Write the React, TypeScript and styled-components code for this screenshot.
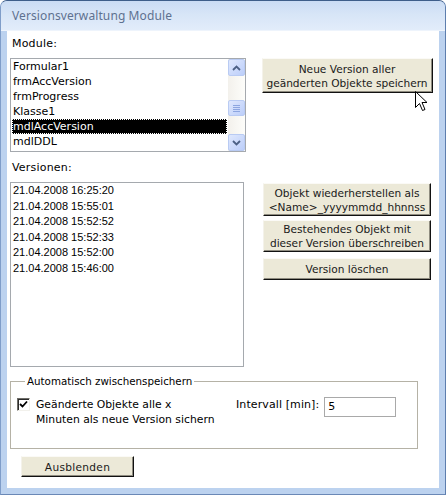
import React from 'react';
import styled, { createGlobalStyle } from 'styled-components';

const GlobalStyle = createGlobalStyle`
  body {
    margin: 0;
    background: #ffffff;
  }
`;

const UI_FONT = `"DejaVu Sans", Tahoma, sans-serif`;

const Window = styled.div`
  position: relative;
  box-sizing: border-box;
  width: 446px;
  height: 495px;
  display: flex;
  flex-direction: column;
  border: 1px solid #3e5e8a;
  border-left-color: #7f9dc9;
  border-right-color: #5d7eae;
  border-bottom-color: #6a88b6;
  border-radius: 7px 7px 0 0;
  background: #bcd2ef;
  overflow: hidden;
`;

const TitleBar = styled.div`
  height: 29px;
  flex: none;
  display: flex;
  align-items: center;
  padding-left: 11px;
  background: linear-gradient(#cadcf4 0%, #d7e5f7 45%, #e2ecfa 100%);
  border-bottom: 1px solid #eef4fc;
`;

const Title = styled.span`
  font-family: "Noto Sans", "Open Sans", sans-serif;
  font-size: 12px;
  color: #5e7190;
  letter-spacing: 0.1px;
`;

const Client = styled.div`
  position: relative;
  flex: 1;
  margin: 0 6px 6px 6px;
  padding: 0 0 0 3px;
  background: #ffffff;
  font-family: ${UI_FONT};
  font-size: 11px;
  color: #000;
`;

const Main = styled.div`
  display: flex;
  align-items: flex-start;
`;

const LeftCol = styled.div`
  display: flex;
  flex-direction: column;
  width: 236px;
`;

const RightCol = styled.div`
  display: flex;
  flex-direction: column;
  align-items: center;
  width: 172px;
  margin-left: 15px;
`;

const Label = styled.div<{ $top: number }>`
  margin-top: ${(p) => p.$top}px;
  padding-left: 2px;
  line-height: 14px;
  letter-spacing: 0.2px;
`;

const ListBox = styled.div`
  box-sizing: border-box;
  width: 236px;
  height: 94px;
  margin-top: 7px;
  display: flex;
  border: 1px solid #a5a9ae;
`;

const ListItems = styled.div`
  flex: 1;
  padding: 0 1px;
`;

const Item = styled.div<{ $selected?: boolean }>`
  height: 15px;
  line-height: 15px;
  padding-left: 1px;
  white-space: nowrap;
  background: ${(p) => (p.$selected ? '#000000' : 'transparent')};
  color: ${(p) => (p.$selected ? '#ffffff' : '#000000')};
  outline: ${(p) => (p.$selected ? '1px dotted #ffffff' : 'none')};
  outline-offset: -1px;
`;

const ScrollBar = styled.div`
  width: 17px;
  display: flex;
  flex-direction: column;
  background: linear-gradient(90deg, #f3f1ec, #fdfdfa);
`;

const ScrollBtn = styled.div`
  box-sizing: border-box;
  height: 17px;
  display: flex;
  align-items: center;
  justify-content: center;
  border: 1px solid #b9cbf3;
  border-radius: 2px;
  background: linear-gradient(135deg, #dfe8fd, #bccefa);
`;

const Track = styled.div`
  flex: 1;
  display: flex;
  flex-direction: column;
  padding-top: 24px;
`;

const Thumb = styled(ScrollBtn)`
  height: 16px;
`;

const VersionList = styled.div`
  box-sizing: border-box;
  width: 234px;
  height: 185px;
  margin-top: 7px;
  padding: 0 2px;
  border: 1px solid #a5a9ae;
  font-family: "Liberation Sans", Arial, sans-serif;
  font-size: 11px;
`;

const VersionItem = styled.div`
  line-height: 15.5px;
  white-space: nowrap;
`;

const ActionButton = styled.button<{ $w: number; $h: number; $top: number }>`
  box-sizing: border-box;
  width: ${(p) => p.$w}px;
  height: ${(p) => p.$h}px;
  margin-top: ${(p) => p.$top}px;
  padding: 0;
  font-family: ${UI_FONT};
  font-size: 10.6px;
  font-weight: 400;
  line-height: 14px;
  letter-spacing: 0;
  color: #1a1a1a;
  background: #ece9d8;
  border-style: solid;
  border-width: 1px;
  border-color: #fbfaf6 #111111 #111111 #f4f2ea;
  box-shadow: inset -1px -1px 0 #8f8c80;
  white-space: nowrap;
`;

const GroupBox = styled.fieldset`
  box-sizing: border-box;
  width: 408px;
  height: 75px;
  margin: 7px 0 0 0;
  padding: 9px 0 0 6px;
  border: 1px solid #b5b2a6;
  border-radius: 0;
`;

const Legend = styled.legend`
  margin-left: 8px;
  padding: 0 2px;
  font-size: 10.3px;
  line-height: 14px;
`;

const GroupRow = styled.div`
  display: flex;
  align-items: flex-start;
`;

const CheckRow = styled.div`
  display: flex;
  align-items: flex-start;
  width: 219px;
  flex: none;
`;

const CheckBox = styled.span`
  box-sizing: border-box;
  width: 13px;
  height: 13px;
  margin-top: 1px;
  flex: none;
  display: flex;
  align-items: center;
  justify-content: center;
  background: #ffffff;
  border: 1px solid;
  border-color: #6e6d68 #f2f1ec #f2f1ec #6e6d68;
  box-shadow: inset 1px 1px 0 #2b2b2b;
`;

const CheckText = styled.div`
  margin-left: 6px;
  font-size: 10.8px;
  line-height: 15px;
`;

const IntervalLabel = styled.div`
  line-height: 15px;
  letter-spacing: 0.1px;
`;

const NumberField = styled.div`
  box-sizing: border-box;
  width: 72px;
  height: 20px;
  margin: 0 0 0 5px;
  padding: 2px 0 0 3px;
  border: 1px solid #a9a9a9;
  line-height: 14px;
`;

const FooterButton = styled(ActionButton)`
  margin-left: 11px;
  letter-spacing: 0.3px;
`;

const Pointer = styled.svg`
  position: absolute;
  left: 408px;
  top: 60px;
`;

const modules = ['Formular1', 'frmAccVersion', 'frmProgress', 'Klasse1', 'mdlAccVersion', 'mdlDDL'];

const versions = [
	'21.04.2008 16:25:20',
	'21.04.2008 15:55:01',
	'21.04.2008 15:52:52',
	'21.04.2008 15:52:33',
	'21.04.2008 15:52:00',
	'21.04.2008 15:46:00',
];

function Arrow({ up }: { up?: boolean }) {
	return (
		<svg width="9" height="6" viewBox="0 0 9 6">
			<path
				d={up ? 'M1 5 L4.5 1.5 L8 5' : 'M1 1 L4.5 4.5 L8 1'}
				fill="none"
				stroke="#4d6185"
				strokeWidth="1.8"
			/>
		</svg>
	);
}

function Grip() {
	return (
		<svg width="7" height="7" viewBox="0 0 7 7">
			{[0.5, 2.5, 4.5, 6.5].map((y) => (
				<line key={y} x1="0" x2="7" y1={y} y2={y} stroke="#8da6e0" strokeWidth="1" />
			))}
		</svg>
	);
}

export default function App() {
	return (
		<>
			<GlobalStyle />
			<Window>
				<TitleBar>
					<Title>Versionsverwaltung Module</Title>
				</TitleBar>
				<Client>
					<Main>
						<LeftCol>
							<Label $top={6}>Module:</Label>
							<ListBox>
								<ListItems>
									{modules.map((m) => (
										<Item key={m} $selected={m === 'mdlAccVersion'}>
											{m}
										</Item>
									))}
								</ListItems>
								<ScrollBar>
									<ScrollBtn>
										<Arrow up />
									</ScrollBtn>
									<Track>
										<Thumb>
											<Grip />
										</Thumb>
									</Track>
									<ScrollBtn>
										<Arrow />
									</ScrollBtn>
								</ScrollBar>
							</ListBox>
							<Label $top={9}>Versionen:</Label>
							<VersionList>
								{versions.map((v) => (
									<VersionItem key={v}>{v}</VersionItem>
								))}
							</VersionList>
						</LeftCol>
						<RightCol>
							<ActionButton $w={171} $h={35} $top={27}>
								Neue Version aller
								<br />
								geänderten Objekte speichern
							</ActionButton>
							<ActionButton $w={168} $h={33} $top={90}>
								Objekt wiederherstellen als
								<br />
								&lt;Name&gt;_yyyymmdd_hhnnss
							</ActionButton>
							<ActionButton $w={168} $h={32} $top={4}>
								Bestehendes Objekt mit
								<br />
								dieser Version überschreiben
							</ActionButton>
							<ActionButton $w={168} $h={22} $top={6}>
								Version löschen
							</ActionButton>
						</RightCol>
					</Main>
					<GroupBox>
						<Legend>Automatisch zwischenspeichern</Legend>
						<GroupRow>
							<CheckRow>
								<CheckBox>
									<svg width="9" height="9" viewBox="0 0 9 9">
										<path d="M1 4 L3.5 6.5 L8 1.5" fill="none" stroke="#000" strokeWidth="1.8" />
									</svg>
								</CheckBox>
								<CheckText>
									Geänderte Objekte alle x
									<br />
									Minuten als neue Version sichern
								</CheckText>
							</CheckRow>
							<IntervalLabel>Intervall [min]:</IntervalLabel>
							<NumberField>5</NumberField>
						</GroupRow>
					</GroupBox>
					<FooterButton $w={113} $h={21} $top={7}>
						Ausblenden
					</FooterButton>
					<Pointer width="13" height="21" viewBox="0 0 13 21">
						<path
							d="M0.5 0.5 L0.5 16.5 L4.5 12.5 L7.5 19.5 L10 18.5 L7 11.5 L12 11.5 Z"
							fill="#ffffff"
							stroke="#000000"
							strokeWidth="1"
							strokeLinejoin="miter"
						/>
					</Pointer>
				</Client>
			</Window>
		</>
	);
}
